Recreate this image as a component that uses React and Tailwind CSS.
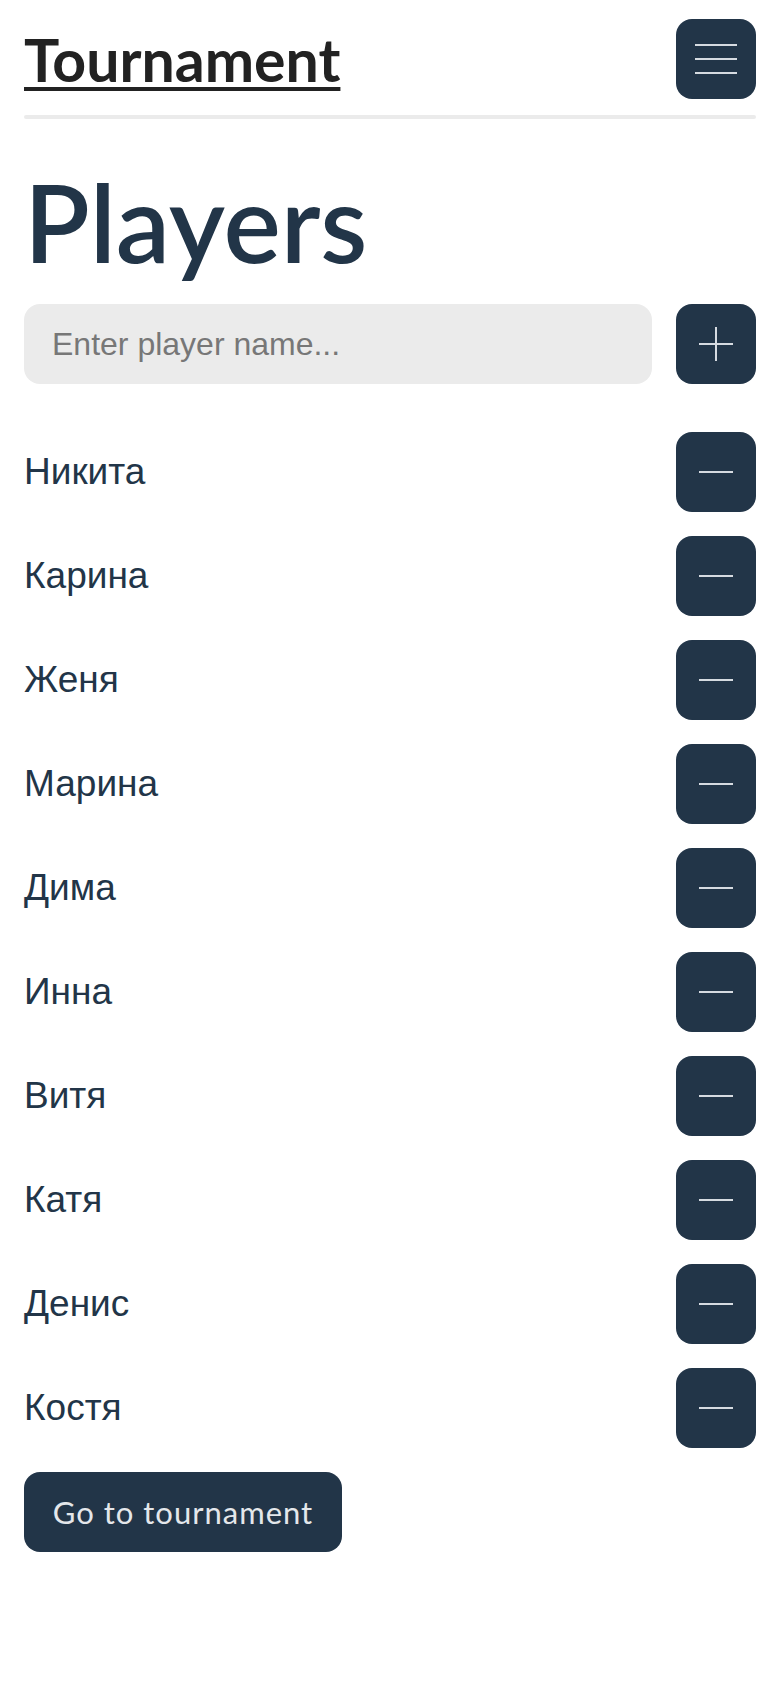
import { useState } from 'react';

const initialPlayers = ['Никита', 'Карина', 'Женя', 'Марина', 'Дима', 'Инна', 'Витя', 'Катя', 'Денис', 'Костя'];

const IconButton = ({ children, onClick }) => (
    <button
        onClick={onClick}
        className="w-20 h-20 shrink-0 rounded-[16px] bg-[#223548] flex items-center justify-center"
    >
        {children}
    </button>
);

const App = () => {
    const [players, setPlayers] = useState(initialPlayers);
    const [name, setName] = useState('');

    const addPlayer = () => {
        if (!name.trim()) return;
        setPlayers([...players, name.trim()]);
        setName('');
    };

    const removePlayer = (index) => {
        setPlayers(players.filter((_, i) => i !== index));
    };

    return (
        <div className="min-h-screen bg-white px-6 pt-[19px] pb-16 font-['Lato',sans-serif]">
            <header className="flex justify-between items-center">
                <a href="#" className="text-[59px] leading-none font-bold text-[#222222] underline decoration-[4px] underline-offset-[5px]">
                    Tournament
                </a>
                <IconButton>
                    <svg width="42" height="32" viewBox="0 0 42 32" fill="none">
                        <line x1="0" y1="2" x2="42" y2="2" stroke="#d6dbe1" strokeWidth="2" />
                        <line x1="0" y1="16" x2="42" y2="16" stroke="#d6dbe1" strokeWidth="2" />
                        <line x1="0" y1="30" x2="42" y2="30" stroke="#d6dbe1" strokeWidth="2" />
                    </svg>
                </IconButton>
            </header>
            <div className="mt-4 h-1 rounded-full bg-[#ebebeb]" />

            <main>
                <h1 className="mt-[48px] text-[108px] leading-none font-semibold text-[#223548]">Players</h1>

                <div className="mt-[29px] flex items-center gap-6">
                    <input
                        value={name}
                        onChange={(e) => setName(e.target.value)}
                        placeholder="Enter player name..."
                        className="flex-1 min-w-0 h-20 rounded-[16px] bg-[#ebebeb] px-7 text-[32px] text-[#223548] placeholder:text-[#777777] font-['Liberation_Sans',Arial,sans-serif] outline-none"
                    />
                    <IconButton onClick={addPlayer}>
                        <svg width="34" height="34" viewBox="0 0 34 34" fill="none">
                            <line x1="0" y1="17" x2="34" y2="17" stroke="#d6dbe1" strokeWidth="2" />
                            <line x1="17" y1="0" x2="17" y2="34" stroke="#d6dbe1" strokeWidth="2" />
                        </svg>
                    </IconButton>
                </div>

                <ul className="mt-12 flex flex-col gap-6">
                    {players.map((p, i) => (
                        <li key={i} className="flex items-center justify-between">
                            <span className="text-[37px] text-[#223548] font-['Liberation_Sans',Arial,sans-serif]">{p}</span>
                            <IconButton onClick={() => removePlayer(i)}>
                                <svg width="34" height="2" viewBox="0 0 34 2" fill="none">
                                    <line x1="0" y1="1" x2="34" y2="1" stroke="#d6dbe1" strokeWidth="2" />
                                </svg>
                            </IconButton>
                        </li>
                    ))}
                </ul>

                <button className="mt-6 h-20 w-[318px] rounded-[16px] bg-[#223548] text-[31px] tracking-[1px] text-[#e4e7eb]">
                    Go to tournament
                </button>
            </main>
        </div>
    );
};

export default App;
